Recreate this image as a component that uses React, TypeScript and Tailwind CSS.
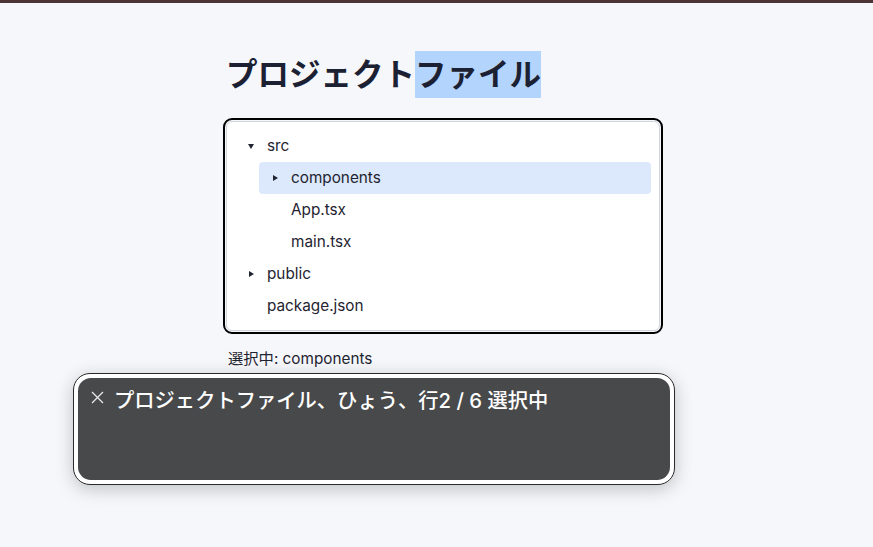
type Node = {
  name: string
  depth: number
  kind: 'open' | 'closed' | 'file'
  selected?: boolean
}

const rows: Node[] = [
  { name: 'src', depth: 0, kind: 'open' },
  { name: 'components', depth: 1, kind: 'closed', selected: true },
  { name: 'App.tsx', depth: 1, kind: 'file' },
  { name: 'main.tsx', depth: 1, kind: 'file' },
  { name: 'public', depth: 0, kind: 'closed' },
  { name: 'package.json', depth: 0, kind: 'file' },
]

function Toggle({ kind }: { kind: Node['kind'] }) {
  if (kind === 'file') return <span className="w-4 shrink-0" />
  return (
    <span className="flex w-4 shrink-0 items-center justify-center text-[#1f2430]">
      {kind === 'open' ? (
        <svg width="6" height="5" viewBox="0 0 6 5">
          <path d="M0 0h6L3 5z" fill="currentColor" />
        </svg>
      ) : (
        <svg width="5" height="6" viewBox="0 0 5 6">
          <path d="M0 0l5 3-5 3z" fill="currentColor" />
        </svg>
      )}
    </span>
  )
}

export default function App() {
  return (
    <div
      className="relative min-h-screen border-t-[3px] border-[#4b3434] bg-[#f5f7fb] text-[#1f2430]"
      style={{ fontFamily: 'Inter, "Noto Sans CJK JP", sans-serif' }}
    >
      <div className="pl-[226px] pt-[48px]">
        <h1 className="text-[31.5px] font-bold leading-[48px] text-[#1b2133]">
          プロジェクト<span className="bg-[#b3d4fc] py-[4px]">ファイル</span>
        </h1>

        {/* tree */}
        <ul
          role="tree"
          className="mt-[22px] w-[434px] rounded-md border border-gray-300 bg-white p-2 outline-2 outline-offset-1 outline-black"
        >
          {rows.map((r) => (
            <li
              key={r.name}
              role="treeitem"
              className={`flex h-8 items-center gap-2 rounded px-2 text-[15.3px] ${
                r.selected ? 'bg-[#dce8fb]' : ''
              } ${r.depth === 1 ? 'ml-6' : ''}`}
            >
              <Toggle kind={r.kind} />
              <span>{r.name}</span>
            </li>
          ))}
        </ul>

        <p className="mt-[16px] pl-[2px] text-[15.3px] leading-6 text-[#1f2430]">選択中: components</p>
      </div>

      {/* screen reader caption panel */}
      <div className="absolute left-[73px] top-[370px] h-[112px] w-[602px] rounded-[17px] border border-[#2a2a2a] bg-white p-[4px] shadow-[0_4px_18px_rgba(0,0,0,0.22)]">
        <div className="flex h-full gap-[10px] rounded-[13px] bg-[#48494b] px-[13px] pt-[10px]">
          <svg width="13" height="13" viewBox="0 0 13 13" className="mt-[3px] shrink-0">
            <path d="M1 1l11 11M12 1L1 12" stroke="#e8e8e8" strokeWidth="1.3" />
          </svg>
          <span className="text-[20.3px] font-medium leading-[26px] text-white">
            プロジェクトファイル、ひょう、行2 / 6 選択中
          </span>
        </div>
      </div>
    </div>
  )
}
